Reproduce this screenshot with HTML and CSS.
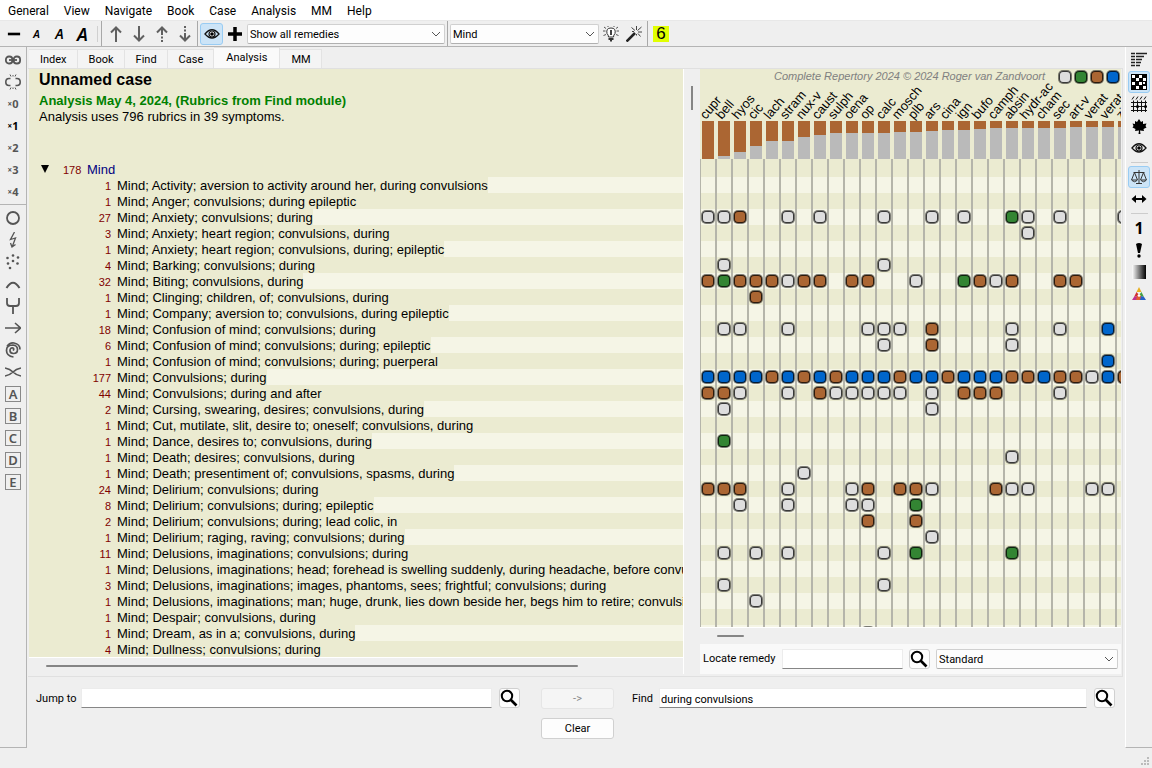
FILE: index.html
```html
<!DOCTYPE html>
<html lang="en">
<head>
  <meta charset="UTF-8">
  <meta name="viewport" content="width=device-width, initial-scale=1.0">
  <title>Unnamed case - Analysis</title>
  <link rel="stylesheet" href="styles.css">
</head>
<body>

  <svg class="sprite" aria-hidden="true">
    <symbol id="search" viewBox="0 0 18 18"><circle cx="7" cy="7" r="5.2" fill="none" stroke="#000" stroke-width="2"/><path d="M10.5 10.5l6 6" stroke="#000" stroke-width="2.6"/></symbol>
    <symbol id="chevron" viewBox="0 0 10 10"><path d="M1 3l4 4 4-4" fill="none" stroke="#555"/></symbol>
    <symbol id="eye" viewBox="0 0 16 16"><path d="M1 8Q8-.5 15 8 8 16 1 8z" fill="none" stroke="#111" stroke-width="1.300"/><circle cx="8" cy="8" r="3" fill="#fff" stroke="#111" stroke-width="1.200"/><circle cx="8" cy="8" r="1.800" fill="#000"/></symbol>
  </svg>

  <nav class="menubar">
    <a href="#">General</a><a href="#">View</a><a href="#">Navigate</a><a href="#">Book</a><a href="#">Case</a><a href="#">Analysis</a><a href="#">MM</a><a href="#">Help</a>
  </nav>

  <div class="toolbar">
    <div class="group fonts">
      <button aria-label="Remove"><svg viewBox="0 0 16 16"><path d="M1 8h14" stroke="#000" stroke-width="3"/></svg></button>
      <button class="size-s">A</button>
      <button class="size-m">A</button>
      <button class="size-l">A</button>
      <i class="thin"></i>
    </div>
    <div class="group arrows">
      <button aria-label="Up"><svg viewBox="0 0 16 16"><path d="M8 16V2M3 6.500L8 1.500l5 5"/></svg></button>
      <button aria-label="Down"><svg viewBox="0 0 16 16"><path d="M8 0v14M3 9.500l5 5 5-5"/></svg></button>
      <button aria-label="Previous"><svg viewBox="0 0 16 16"><path d="M8 9V2M3 6.500L8 1.500l5 5M8 10.500v2M8 14v2"/></svg></button>
      <button aria-label="Next"><svg viewBox="0 0 16 16"><path d="M8 7v7M3 9.500l5 5 5-5M8 0v2M8 3.500v2"/></svg></button>
    </div>
    <div class="group filters">
      <button class="on" aria-label="Show"><svg viewBox="0 0 16 16"><use href="#eye"/></svg></button>
      <button aria-label="Add"><svg viewBox="0 0 16 16"><path d="M1 8h14M8 1v14" stroke="#000" stroke-width="3.500"/></svg></button>
      <div class="select remedies">
        <select aria-label="Remedies"><option>Show all remedies</option></select>
        <svg><use href="#chevron"/></svg>
      </div>
    </div>
    <div class="group chapters">
      <div class="select chapter">
        <select aria-label="Chapter"><option>Mind</option></select>
        <svg><use href="#chevron"/></svg>
      </div>
      <button aria-label="Hint"><svg viewBox="0 0 16 16"><path d="M5.500 11Q5.500 9 4 7.500 2.800 2 8 2t4 5.500Q10.500 9 10.500 11z" fill="#fff" stroke="#333"/><path d="M8 4v5" stroke="#111" stroke-width="1.600"/><path d="M5.500 12h5v2h-1.500v1.500H7V14H5.500z" fill="#333"/><path d="M0 5h2.500M13.500 5H16M1 1l2 1.500M15 1l-2 1.500M.5 9.500l2.500-1M15.500 9.500l-2.500-1M5 0v1M11 0v1" stroke="#555"/></svg></button>
      <button aria-label="Wizard"><svg viewBox="0 0 16 16"><path d="M.5 15.500L9 7" stroke="#222" stroke-width="2.600"/><path d="M10.500 0v4M15.500 1l-4 3.500M16 6h-4M14.500 10.500L12 7.500M5.500 1.500L9 4.500M10.500 9.500V8M6 5.500h2" stroke="#444"/></svg></button>
    </div>
    <button class="six">6</button>
  </div>

  <div class="workspace">
    <aside class="sidebar left">
      <button aria-label="Link"><svg viewBox="0 0 16 16"><g fill="none" stroke="#555" stroke-width="1.800"><rect x=".9" y="4.500" width="6.500" height="7" rx="3"/><rect x="8.600" y="4.500" width="6.500" height="7" rx="3"/><path d="M4 8h8"/></g></svg></button>
      <button aria-label="Unlink"><svg viewBox="0 0 16 16"><g fill="none" stroke="#555" stroke-width="1.600"><path d="M5.500 4.500H4Q.8 4.500.8 8T4 11.500h1.500M10.500 4.500H12q3.200 0 3.200 3.500T12 11.500h-1.500"/><path d="M5 .5l1 2M8 1v1.500M11 .5l-1 2M5 15.500l1-2M8 15v-1.500M11 15.500l-1-2" stroke-width="1"/></g></svg></button>
      <button class="weight"><small>×</small>0</button>
      <button class="weight active"><small>×</small>1</button>
      <button class="weight"><small>×</small>2</button>
      <button class="weight"><small>×</small>3</button>
      <button class="weight"><small>×</small>4</button>
      <hr>
      <button aria-label="Circle"><svg viewBox="0 0 16 16"><circle cx="8" cy="8" r="6" fill="none" stroke="#555" stroke-width="1.800"/></svg></button>
      <button aria-label="Lightning"><svg viewBox="0 0 16 16"><path d="M9.500 0L5.500 7.500l5-1.500-3 8M5.500 11l1.500 4 3.500-2.500" fill="none" stroke="#555" stroke-width="1.300"/></svg></button>
      <button aria-label="Scatter"><svg viewBox="0 0 16 16"><g fill="#555"><circle cx="8" cy="1.500" r="1.300"/><circle cx="2.500" cy="4" r="1.300"/><circle cx="13" cy="3.500" r="1.300"/><circle cx="8" cy="7" r="1.300"/><circle cx="3" cy="9.500" r="1.300"/><circle cx="12.500" cy="9.500" r="1.300"/><circle cx="5" cy="14" r="1.300"/></g></svg></button>
      <button aria-label="Arc"><svg viewBox="0 0 16 16"><path d="M1.500 12Q8 1.500 14.500 12" fill="none" stroke="#555" stroke-width="2"/></svg></button>
      <button aria-label="Fork"><svg viewBox="0 0 16 16"><path d="M2 0v5q0 3 3 3h6q3 0 3-3V0M8 8v8" fill="none" stroke="#555" stroke-width="1.800"/></svg></button>
      <button aria-label="Arrow"><svg viewBox="0 0 16 16"><path d="M0 8h15M10 3l5.500 5L10 13" fill="none" stroke="#555" stroke-width="1.600"/></svg></button>
      <button aria-label="Spiral"><svg viewBox="0 0 16 16"><path d="M8 8.500q1.500-1.500 0-2.500-3-.5-3 2.500 0 3 3.500 3 4 0 4-4T8 3Q1.500 3 1.500 8.500t7 6.500M2 4.500Q4.500.5 9 1q6 1 6 6.500" fill="none" stroke="#555" stroke-width="1.700"/></svg></button>
      <button aria-label="Cross"><svg viewBox="0 0 16 16"><path d="M0 4q5 1 8 4 3 3 8 4M0 12q5-1 8-4 3-3 8-4" fill="none" stroke="#555" stroke-width="1.700"/></svg></button>
      <button class="letter"><span>A</span></button>
      <button class="letter"><span>B</span></button>
      <button class="letter"><span>C</span></button>
      <button class="letter"><span>D</span></button>
      <button class="letter"><span>E</span></button>
    </aside>

    <main>
      <div class="tabs">
        <button>Index</button><button>Book</button><button>Find</button><button>Case</button><button class="current">Analysis</button><button>MM</button>
      </div>

      <div class="pane">
        <section class="list">
          <div class="rubrics">
            <h1>Unnamed case</h1>
            <h2>Analysis May 4, 2024, (Rubrics from Find module)</h2>
            <p>Analysis uses 796 rubrics in 39 symptoms.</p>
            <div class="chapter-head"><span class="toggle"><svg viewBox="0 0 8 8"><path d="M0 0h8L4 8z"/></svg></span><span class="total">178</span><a href="#">Mind</a></div>
            <ul id="rubricList"></ul>
          </div>
          <div class="scroll"><i></i></div>
        </section>

        <div class="splitter"><i></i></div>

        <section class="analysis">
          <div class="matrix">
            <div class="credit">
              <em>Complete Repertory 2024 © 2024 Roger van Zandvoort</em>
              <i class="chip w"></i><i class="chip g"></i><i class="chip b"></i><i class="chip u"></i>
            </div>
            <table>
              <thead><tr id="remedies"></tr></thead>
              <tbody id="grades"></tbody>
            </table>
          </div>
          <div class="scroll"><i></i></div>
          <div class="locate">
            <label for="locate">Locate remedy</label>
            <input type="text" id="locate">
            <button class="search" aria-label="Locate"><svg><use href="#search"/></svg></button>
            <div class="select">
              <select aria-label="Mode"><option>Standard</option></select>
              <svg><use href="#chevron"/></svg>
            </div>
          </div>
        </section>
      </div>

      <div class="finder">
        <label class="jump-label" for="jump">Jump to</label>
        <input type="text" id="jump">
        <button class="search" aria-label="Jump"><svg><use href="#search"/></svg></button>
        <div class="actions">
          <button class="push" disabled>-&gt;</button>
          <button class="push">Clear</button>
        </div>
        <label class="find-label" for="find">Find</label>
        <input type="text" id="find" value="during convulsions">
        <button class="search" aria-label="Find"><svg><use href="#search"/></svg></button>
      </div>
    </main>

    <aside class="sidebar right">
      <button aria-label="Sort"><svg viewBox="0 0 16 16"><path d="M0 1.500h4M0 4.500h4M0 7.500h4M0 10.500h4M0 13.500h4" stroke="#222" stroke-width="1.500"/><path d="M5 1.500h11M5 4.500h8M5 7.500h6M5 10.500h5M5 13.500h4" stroke="#222" stroke-width="1.500"/></svg></button>
      <button class="on" aria-label="Grid"><svg viewBox="0 0 16 16"><path d="M0 0h16v16H0z"/><path d="M1 1h3v3H1zM8 1h3v3H8zM5 4h3v3H5zM12 4h3v3h-3zM1 8h3v3H1zM8 8h3v3H8zM5 12h3v3H5zM12 12h3v3h-3zM12 8h2v2h-2z" fill="#fff"/></svg></button>
      <button aria-label="Table"><svg viewBox="0 0 16 16"><path d="M0 6.500h16M0 10.500h16M0 14.500h16M2.500 4.500V16M6.500 4.500V16M10.500 4.500V16M14.500 4.500V16M1 3.500l2-3M5 3.500l2-3M9 3.500l2-3M13 3.500l2-3" stroke="#111"/><circle cx="6.500" cy="10.500" r="1.500"/><circle cx="14.500" cy="10.500" r="1.500"/></svg></button>
      <button aria-label="Family"><svg viewBox="0 0 16 16"><path d="M8 1l2 3 2-1v3l3.500-.5L14.500 8l1 1.500-3 1.500.5 2-4-.5.5 3.500h-2l.5-3.500-4 .5.500-2-3-1.500 1-1.500-1-2.500L4 6V3l2 1z"/></svg></button>
      <button aria-label="View"><svg viewBox="0 0 16 16"><use href="#eye"/></svg></button>
      <hr>
      <button class="on" aria-label="Balance"><svg viewBox="0 0 16 16"><path d="M8 1v13M2.500 3.500h11M5 14.500h6M3.500 3.500L.5 11h6zM12.500 3.500l-3 7.500h6zM1 11.500q2.500 2.500 5 0M10 11.500q2.500 2.500 5 0" fill="none" stroke="#333"/></svg></button>
      <button aria-label="Width"><svg viewBox="0 0 16 16"><path d="M2 8h12" stroke="#000" stroke-width="2"/><path d="M.5 8L5 4v8zM15.500 8L11 4v8z"/></svg></button>
      <hr>
      <button class="one">1</button>
      <button aria-label="Important"><svg viewBox="0 0 16 16"><path d="M5 2q3-2 6 0L9 11H7z"/><circle cx="8" cy="14" r="1.700"/></svg></button>
      <button aria-label="Shade"><i class="shade"></i></button>
      <button aria-label="Colours"><svg viewBox="0 0 16 16"><path d="M8 1l2.500 5h-5z" fill="#e8b020"/><path d="M5.500 6L8 9l-3 1.500-2 .5z" fill="#d03030"/><path d="M10.500 6L8 9l3 1.500 2 .5z" fill="#46a040"/><path d="M3 11l3-1 1 4H1z" fill="#c03090"/><path d="M6 10l2-1 2 1 1 4H5z" fill="#e06030"/><path d="M10 10l3 1 2 3H9z" fill="#2860c8"/><circle cx="8" cy="9.500" r="1.300" fill="#fff"/></svg></button>
    </aside>
  </div>

  <footer class="status">
    <svg viewBox="0 0 9 9"><path d="M6 0h2v2H6zM3 3h2v2H3zM6 3h2v2H6zM0 6h2v2H0zM3 6h2v2H3zM6 6h2v2H6z" fill="#bbb"/></svg>
  </footer>

  <script src="script.js"></script>
</body>
</html>
```
FILE: styles.css
```css
* {
  box-sizing: border-box;
}

body {
  display: flex;
  flex-direction: column;
  height: 100vh;
  margin: 0;
  overflow: hidden;
  background-color: #efefef;
  font: 11px/16px Roboto, sans-serif;
  color: #000;
}

button,
input,
select {
  margin: 0;
  padding: 0;
  border: 0;
  background: none;
  font: inherit;
  color: inherit;
}

a {
  color: inherit;
  text-decoration: none;
}

svg {
  display: block;
}

.sprite {
  display: none;
}

/* menu and toolbar */

.menubar {
  display: flex;
  gap: 15px;
  height: 21px;
  padding: 3px 8px 0;
  background-color: #fff;
  border-bottom: 1px solid #e8e8e8;
  font-size: 12px;
}

.toolbar {
  display: flex;
  height: 26px;
  border-bottom: 1px solid #b4b4b4;
}

.toolbar svg {
  width: 16px;
  height: 16px;
}

.group {
  display: flex;
  align-items: center;
  border-right: 1px solid #a8a8a8;
}

.group button {
  display: flex;
  align-items: center;
  justify-content: center;
  width: 23px;
  height: 22px;
}

.fonts {
  width: 102px;
  padding-left: 2px;
}

.fonts button {
  font-family: "Noto Sans", sans-serif;
  font-style: italic;
  font-weight: 600;
}

.fonts svg {
  width: 14px;
}

.fonts .size-s { font-size: 11px; }
.fonts .size-m { font-size: 14px; }
.fonts .size-l { font-size: 18px; }

.thin {
  width: 1px;
  height: 16px;
  margin-left: 3px;
  background-color: #d0d0d0;
}

.arrows {
  width: 96px;
  padding-left: 2px;
}

.arrows path {
  fill: none;
  stroke: #606060;
  stroke-width: 2;
}

.filters {
  width: 250px;
  padding-left: 2px;
}

.group .on,
.sidebar .on {
  background-color: #cce4f7;
  border: 1px solid #99ccf3;
  border-radius: 3px;
}

.select {
  position: relative;
  flex: 1;
  height: 20px;
}

.select select {
  display: block;
  width: 100%;
  height: 20px;
  padding: 2px 2px 0;
  appearance: none;
  background-color: #fdfdfd;
  border: 1px solid #d0d0d0;
  border-bottom-color: #b0b0b0;
  border-radius: 2px;
}

.toolbar .select svg,
.select svg {
  position: absolute;
  top: 5px;
  right: 4px;
  width: 10px;
  height: 10px;
  pointer-events: none;
}

.remedies {
  margin: 0 2px 0 1px;
}

.chapters {
  width: 200px;
  padding: 0 2px;
}

.six {
  align-self: center;
  width: 16px;
  height: 16px;
  margin-left: 5px;
  background-color: #e1ff00;
  font: 17px/16px "Liberation Sans", sans-serif;
}

/* side bars */

.workspace {
  display: flex;
  flex: 1;
  min-height: 0;
}

.sidebar {
  display: flex;
  flex-direction: column;
  width: 27px;
  padding-top: 1px;
  border-bottom: 1px solid #b4b4b4;
  font-family: "Noto Sans", sans-serif;
}

.sidebar button {
  display: flex;
  flex: none;
  align-items: center;
  justify-content: center;
  width: 100%;
  height: 22px;
}

.sidebar svg {
  width: 16px;
  height: 16px;
}

.sidebar hr {
  width: 100%;
  margin: 1px 0 2px;
  border: 0;
  border-top: 1px solid #b4b4b4;
}

.left {
  padding-top: 2px;
  border-right: 1px solid #b4b4b4;
}

.weight {
  font-weight: bold;
  color: #555;
}

.weight small {
  font-size: 8px;
}

.active {
  color: #000;
}

.letter span {
  width: 16px;
  height: 16px;
  border: 1px solid #888;
  font-size: 13px;
  font-weight: 600;
  line-height: 14px;
  color: #555;
}

.right {
  padding: 2px 2px 0 2px;
  border-left: 1px solid #fff;
}

.sidebar.right hr {
  width: 17px;
  margin: 3px auto;
  border-color: #ccc;
}

.sidebar .one {
  font-size: 16px;
  font-weight: bold;
}

.shade {
  width: 14px;
  height: 14px;
  background: linear-gradient(to right, #fff, #000);
}

/* tabs */

main {
  display: flex;
  flex: 1;
  flex-direction: column;
  min-width: 0;
  padding: 0 2px 0 1px;
}

.tabs {
  display: flex;
  align-items: flex-end;
  height: 21px;
  padding-left: 1px;
}

.tabs button {
  height: 19px;
  padding: 2px 10px 0 11px;
  background-color: #f4f4f4;
  border: 1px solid #e3e3e3;
  border-width: 1px 1px 0 0;
}

.tabs .current {
  height: 21px;
  padding: 0 12px;
  background-color: #fafafa;
}

.pane {
  display: flex;
  flex: 1;
  min-height: 0;
  padding: 0 1px 2px;
  border: 1px solid #e0e0e0;
  border-width: 1px 1px 1px 0;
}

/* rubric list */

.list {
  display: flex;
  flex: 1;
  flex-direction: column;
  min-width: 0;
}

.rubrics {
  flex: 1;
  min-height: 0;
  padding-top: 1px;
  overflow: hidden;
  background-color: #ebebd1;
  font: 13px/16px "Liberation Sans", sans-serif;
}

.rubrics h1 {
  margin: 0 0 3px 10px;
  font-size: 16px;
  line-height: 20px;
}

.rubrics h2 {
  margin: 0 0 0 10px;
  font-size: 13px;
  line-height: 16px;
  color: #008000;
}

.rubrics p {
  margin: 0 0 36px 10px;
}

.chapter-head {
  display: flex;
  height: 16px;
  padding-left: 12px;
  line-height: 18px;
  color: #000080;
}

.toggle {
  width: 22px;
  padding-top: 4px;
}

.toggle svg {
  width: 8px;
  height: 8px;
}

.total {
  width: 24px;
  font-size: 11px;
  color: #800000;
}

.rubrics ul {
  margin: 0;
  padding: 0;
  line-height: 18px;
  list-style: none;
}

.rubrics li {
  display: flex;
  height: 16px;
  white-space: nowrap;
}

.rubrics li:nth-child(odd) {
  background-color: #f5f5e6;
}

.rubrics b {
  flex: none;
  width: 82px;
  background-color: #ebebd1;
  font-size: 11px;
  font-weight: normal;
  text-align: right;
  color: #800000;
}

.rubrics li span {
  padding-left: 6px;
  background-color: #ebebd1;
}

.scroll {
  height: 17px;
  padding-top: 7px;
  border-top: 1px solid #fff;
}

.scroll i {
  display: block;
  width: 532px;
  height: 2px;
  margin-left: 17px;
  background-color: #858585;
  border-radius: 1px;
}

.splitter {
  width: 17px;
  padding: 17px 0 0 7px;
  border-left: 1px solid #fff;
}

.splitter i {
  display: block;
  width: 2px;
  height: 24px;
  background-color: #858585;
}

/* remedy matrix */

.analysis {
  display: flex;
  flex-direction: column;
  width: 421px;
}

.analysis .scroll i {
  width: 27px;
}

.matrix {
  flex: 1;
  min-height: 0;
  overflow: hidden;
  background-color: #ebebd1;
  font: 12px/14px "Liberation Sans", sans-serif;
}

.credit {
  display: flex;
  justify-content: flex-end;
  gap: 2px;
  height: 15px;
  padding: 1px 1px 0 0;
}

.credit em {
  margin-right: 11px;
  font-size: 11px;
  line-height: 13px;
  color: #808080;
}

.matrix table {
  width: 432px;
  table-layout: fixed;
  border-collapse: separate;
  border-spacing: 0;
}

.matrix th {
  position: relative;
  height: 75px;
  padding: 0 2px;
  font-weight: normal;
  vertical-align: bottom;
}

.matrix th span {
  position: absolute;
  bottom: 37px;
  left: 8px;
  font-size: 13px;
  transform: rotate(-50deg);
  transform-origin: left bottom;
  white-space: nowrap;
}

.bar {
  height: 38px;
  background-color: #bababa;
}

.bar i {
  display: block;
  background-color: #ab6633;
}

.matrix td {
  height: 16px;
  padding: 0 1px;
  box-shadow: inset 1px 0 #b5b5aa, inset -1px 0 #b5b5aa;
  vertical-align: middle;
}

.matrix tr.head td {
  height: 18px;
}

.matrix tbody tr:nth-child(even) {
  background-color: #f5f5e6;
}

.chip {
  display: block;
  flex: none;
  width: 14px;
  height: 14px;
  background-clip: padding-box;
  border: 1px solid rgba(0, 0, 0, 0.5);
  border-radius: 5px;
  box-shadow: inset 0 0 0 1px rgba(0, 0, 0, 0.75);
}

.w { background-color: #dedede; }
.g { background-color: #338533; }
.b { background-color: #ab6633; }
.u { background-color: #0066cc; }

/* search fields */

input {
  height: 20px;
  padding: 2px 1px 0;
  background-color: #fff;
  border: 1px solid #ececec;
  border-bottom-color: #868686;
}

.search {
  width: 21px;
  height: 20px;
  background-color: #fdfdfd;
  border: 1px solid #d0d0d0;
  border-radius: 3px;
}

.search svg {
  width: 18px;
  height: 18px;
}

.locate {
  display: flex;
  align-items: center;
  gap: 6px;
  height: 30px;
  padding: 0 3px;
  background-color: #f9f9f9;
}

.locate label {
  width: 73px;
  line-height: 18px;
  white-space: nowrap;
}

.locate input {
  width: 121px;
}

.finder {
  display: flex;
  align-items: flex-start;
  gap: 7px;
  height: 71px;
  padding: 11px 8px 0 8px;
}

.finder label {
  flex: none;
  line-height: 22px;
  white-space: nowrap;
}

.jump-label {
  width: 38px;
}

.find-label {
  width: 20px;
}

.finder input {
  flex: 1 1 411px;
  min-width: 0;
}

.finder #find {
  flex-basis: 428px;
}

.actions {
  display: flex;
  flex-direction: column;
  gap: 9px;
  margin: 0 11px 0 14px;
}

.push {
  width: 73px;
  height: 21px;
  background-color: #fdfdfd;
  border: 1px solid #d0d0d0;
  border-radius: 3px;
}

.push:disabled {
  background-color: #f5f5f5;
  border-color: #e5e5e5;
  color: #888;
}

.status {
  display: flex;
  align-items: flex-end;
  justify-content: flex-end;
  height: 20px;
  padding: 2px;
}

.status svg {
  width: 9px;
  height: 9px;
}
```
FILE: script.js
```js
const remedies = [
  ["cupr", 38], ["bell", 35], ["hyos", 31], ["cic", 25], ["lach", 20], ["stram", 20],
  ["nux-v", 16], ["caust", 14], ["sulph", 12], ["oena", 12], ["op", 12], ["calc", 12],
  ["mosch", 11], ["plb", 11], ["ars", 10], ["cina", 9], ["ign", 9], ["bufo", 8],
  ["camph", 7], ["absin", 7], ["hydr-ac", 7], ["cham", 7], ["sec", 7], ["art-v", 6],
  ["verat", 6], ["verat-v", 6], ["zinc", 6]
];

// one letter per remedy: w = 1, g = 2, b = 3, u = 4, dot = not listed
const rubrics = [
  [1, "Mind; Activity; aversion to activity around her, during convulsions", ""],
  [1, "Mind; Anger; convulsions; during epileptic", ""],
  [27, "Mind; Anxiety; convulsions; during", "wwb..w.w...w..w.w..gw.w...w"],
  [3, "Mind; Anxiety; heart region; convulsions, during", "....................w"],
  [1, "Mind; Anxiety; heart region; convulsions, during; epileptic", ""],
  [4, "Mind; Barking; convulsions; during", ".w.........w"],
  [32, "Mind; Biting; convulsions, during", "bgbbbwbb.bb..w..gbwb..bb"],
  [1, "Mind; Clinging; children, of; convulsions, during", "...b"],
  [1, "Mind; Company; aversion to; convulsions, during epileptic", ""],
  [18, "Mind; Confusion of mind; convulsions; during", ".ww..w....www.b....w..w..u"],
  [6, "Mind; Confusion of mind; convulsions; during; epileptic", "...........w..b....w"],
  [1, "Mind; Confusion of mind; convulsions; during; puerperal", ".........................u"],
  [177, "Mind; Convulsions; during", "uuuubububuuubuubuuubbubbwub"],
  [44, "Mind; Convulsions; during and after", "bbw..w.bwwwww.w.bbb...w"],
  [2, "Mind; Cursing, swearing, desires; convulsions, during", ".w............w"],
  [1, "Mind; Cut, mutilate, slit, desire to; oneself; convulsions, during", ""],
  [1, "Mind; Dance, desires to; convulsions, during", ".g"],
  [1, "Mind; Death; desires; convulsions, during", "...................w"],
  [1, "Mind; Death; presentiment of; convulsions, spasms, during", "......w"],
  [24, "Mind; Delirium; convulsions; during", "bbb..w...wb.bbw...bww...ww"],
  [8, "Mind; Delirium; convulsions; during; epileptic", "..w..w...ww..g"],
  [2, "Mind; Delirium; convulsions; during; lead colic, in", "..........b..b"],
  [1, "Mind; Delirium; raging, raving; convulsions; during", "..............w"],
  [11, "Mind; Delusions, imaginations; convulsions; during", ".w.w.w.....w.g.....g"],
  [1, "Mind; Delusions, imaginations; head; forehead is swelling suddenly, during headache, before convulsions", ""],
  [3, "Mind; Delusions, imaginations; images, phantoms, sees; frightful; convulsions; during", ".w.........w"],
  [1, "Mind; Delusions, imaginations; man; huge, drunk, lies down beside her, begs him to retire; convulsions; during", "...w"],
  [1, "Mind; Despair; convulsions, during", ""],
  [1, "Mind; Dream, as in a; convulsions, during", "..........w"],
  [4, "Mind; Dullness; convulsions; during", ""]
];

document.getElementById("rubricList").innerHTML = rubrics
  .map(([count, text]) => `<li><b>${count}</b><span>${text}</span></li>`)
  .join("");

document.getElementById("remedies").innerHTML = remedies
  .map(([name, height]) => `<th><span>${name}</span><div class="bar"><i style="height: ${height}px"></i></div></th>`)
  .join("");

function gradeRow(grades, className) {
  const cells = remedies.map((r, i) => {
    const grade = grades[i];
    return grade && grade !== "." ? `<td><i class="chip ${grade}"></i></td>` : "<td></td>";
  });
  return `<tr class="${className}">${cells.join("")}</tr>`;
}

document.getElementById("grades").innerHTML =
  gradeRow("", "head") + rubrics.map(r => gradeRow(r[2], "")).join("");
```
